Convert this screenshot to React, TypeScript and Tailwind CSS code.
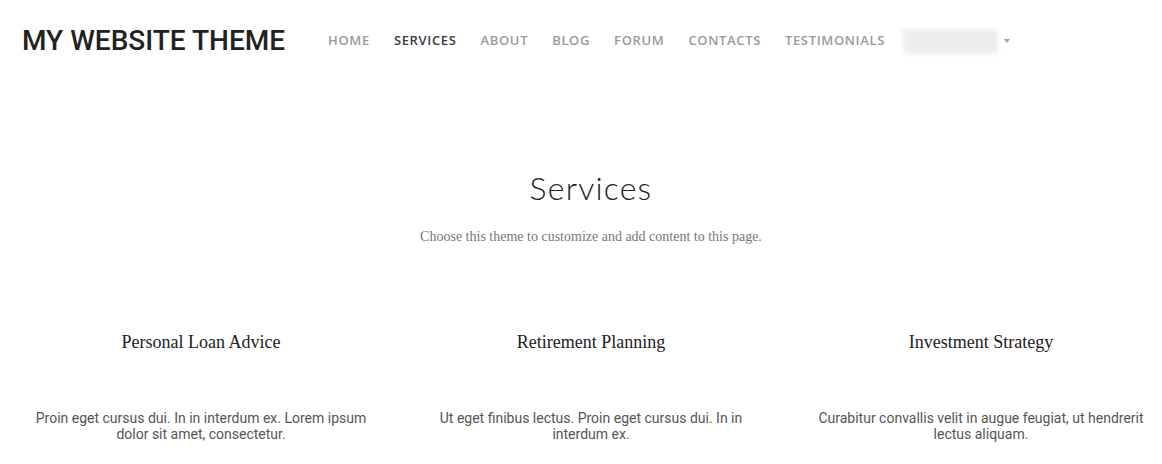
import { useState } from "react";

const navItems = ["Home", "Services", "About", "Blog", "Forum", "Contacts", "Testimonials"];

const cards = [
    {
        title: "Personal Loan Advice",
        text: "Proin eget cursus dui. In in interdum ex. Lorem ipsum dolor sit amet, consectetur.",
    },
    {
        title: "Retirement Planning",
        text: "Ut eget finibus lectus. Proin eget cursus dui. In in interdum ex.",
    },
    {
        title: "Investment Strategy",
        text: "Curabitur convallis velit in augue feugiat, ut hendrerit lectus aliquam.",
    },
];

export default function App() {
    const [active] = useState<string>("Services");

    return (
        <div className="min-h-[464px] bg-white overflow-hidden">
            {/* Top bar */}
            <header className="flex flex-row items-center h-[82px] pl-[22px]">
                <div className="font-['Roboto',sans-serif] font-medium text-[28px] text-[#222] leading-none">
                    MY WEBSITE THEME
                </div>
                <nav className="flex flex-row items-center gap-x-[24px] ml-[43px] font-['Open_Sans',sans-serif] text-[13px] font-semibold tracking-[0.65px] uppercase">
                    {navItems.map((item) => (
                        <a
                            key={item}
                            className={item === active ? "text-[#3a3a44]" : "text-[#9a9a9a]"}
                        >
                            {item}
                        </a>
                    ))}
                    <div className="flex flex-row items-center gap-x-[6px] -ml-[6px]">
                        {/* account name, blurred out */}
                        <div className="w-[95px] h-[25px] bg-[#eeeeee] blur-[2px]" />
                        <span className="w-0 h-0 border-x-[3.5px] border-x-transparent border-t-[4px] border-t-[#a0a0a0]" />
                    </div>
                </nav>
            </header>

            {/* Page intro */}
            <section className="flex flex-col items-center pl-[20px] pt-[86px]">
                <h1 className="font-['Lato',sans-serif] text-[32px] font-light tracking-[1.2px] text-[#222] leading-[40px]">
                    Services
                </h1>
                <p className="mt-[18px] font-['Liberation_Serif',serif] text-[14px] text-[#777]">
                    Choose this theme to customize and add content to this page.
                </p>
            </section>

            {/* Cards */}
            <section className="flex flex-row justify-center pl-[20px] mt-[83px]">
                {cards.map((card) => (
                    <div key={card.title} className="w-[390px] shrink-0 flex flex-col items-center px-[25px]">
                        <h3 className="font-['Liberation_Serif',serif] text-[18px] text-[#222] leading-[24px]">
                            {card.title}
                        </h3>
                        <p className="mt-[56px] text-center font-['Roboto',sans-serif] text-[14px] text-[#555] leading-[16px]">
                            {card.text}
                        </p>
                    </div>
                ))}
            </section>
        </div>
    );
}
